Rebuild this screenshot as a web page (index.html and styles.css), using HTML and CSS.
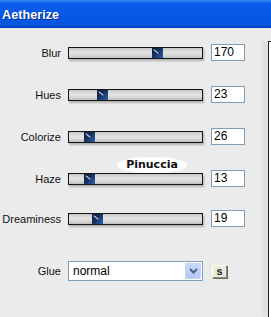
FILE: index.html
```html
<!DOCTYPE html>
<html>
<head>
<meta charset="utf-8">
<link rel="stylesheet" href="styles.css">
</head>
<body>
<div class="titlebar"><span class="title">Aetherize</span></div>
<div class="content">
  <div class="main">
    <div class="row">
      <span class="label">Blur</span>
      <div class="track"><div class="thumb" style="left:83px"></div></div>
      <div class="num">170</div>
    </div>
    <div class="row">
      <span class="label">Hues</span>
      <div class="track"><div class="thumb" style="left:28px"></div></div>
      <div class="num">23</div>
    </div>
    <div class="row">
      <span class="label">Colorize</span>
      <div class="track"><div class="thumb" style="left:15px"></div></div>
      <div class="num">26</div>
    </div>
    <div class="row">
      <span class="label">Haze</span>
      <div class="track"><div class="thumb" style="left:15px"></div></div>
      <div class="num">13</div>
    </div>
    <div class="row row-dream">
      <span class="label">Dreaminess</span>
      <div class="track"><div class="thumb" style="left:23px"></div></div>
      <div class="num">19</div>
    </div>
    <div class="row row-glue">
      <span class="label">Glue</span>
      <div class="select">
        <span class="select-text">normal</span>
        <span class="select-btn">
          <svg width="9" height="6" viewBox="0 0 9 6"><path d="M1 1 L4.5 4.5 L8 1" fill="none" stroke="#4d6185" stroke-width="2"/></svg>
        </span>
      </div>
      <div class="sbtn">s</div>
    </div>
    <div class="watermark">Pinuccia</div>
  </div>
  <div class="side"></div>
</div>
</body>
</html>
```
FILE: styles.css
```css
html, body {
  margin: 0;
  padding: 0;
}
body {
  width: 271px;
  height: 317px;
  background: #ebebeb;
  font-family: "Liberation Sans", Arial, sans-serif;
  overflow: hidden;
}
.titlebar {
  height: 28px;
  box-sizing: border-box;
  background: linear-gradient(#3b8cf5 0px, #1a6ef0 2px, #0a5ce8 4px, #0558e6 20px, #0a55dc 25px, #003cb8 28px);
  display: flex;
  align-items: center;
  padding-left: 2px;
  padding-top: 2px;
}
.title {
  color: #ffffff;
  font-weight: bold;
  font-size: 12.5px;
  text-shadow: 1px 1px 0 #0a2a80;
  letter-spacing: 0.1px;
}
.content {
  display: flex;
  height: 289px;
}
.main {
  position: relative;
  width: 268px;
  padding-top: 16px;
  display: flex;
  flex-direction: column;
  gap: 25px;
}
.row {
  display: flex;
  align-items: center;
  height: 17px;
}
.row-dream {
  margin-top: -2px;
}
.row-glue {
  margin-top: 9px;
  height: 20px;
}
.label {
  width: 61px;
  text-align: right;
  font-size: 11px;
  color: #111;
  flex: none;
}
.track {
  position: relative;
  margin-left: 7px;
  width: 135px;
  height: 12px;
  box-sizing: border-box;
  border: 1px solid #151515;
  background: linear-gradient(#c4c4c4 0px, #dedede 3px, #e4e4e4 5px, #d2d2d2 8px, #bdbdbd 10px);
  box-shadow: 1px 2px 2px rgba(0,0,0,0.25);
  flex: none;
}
.thumb {
  position: absolute;
  top: 0;
  width: 11px;
  height: 10px;
  background: linear-gradient(135deg, #0d1a33 0%, #15305c 45%, #2d63b0 100%);
}
.thumb::before {
  content: "";
  position: absolute;
  left: 1px;
  top: 3px;
  width: 6px;
  height: 1px;
  background: #dfe8f5;
  transform: rotate(40deg);
}
.num {
  margin-left: 8px;
  width: 34px;
  height: 17px;
  box-sizing: border-box;
  border: 1px solid #7f9db9;
  background: #fff;
  font-size: 12px;
  line-height: 15px;
  padding-left: 2px;
  color: #000;
  flex: none;
}
.select {
  margin-left: 7px;
  width: 135px;
  height: 20px;
  box-sizing: border-box;
  border: 1px solid #7f9db9;
  background: #fff;
  display: flex;
  align-items: center;
  justify-content: space-between;
  padding: 1px;
  flex: none;
}
.select-text {
  font-size: 12px;
  padding-left: 3px;
  color: #000;
}
.select-btn {
  width: 16px;
  height: 16px;
  box-sizing: border-box;
  border: 1px solid #c6d4f3;
  background: linear-gradient(#c8d8fb, #b4c8f4);
  display: flex;
  align-items: center;
  justify-content: center;
}
.sbtn {
  margin-left: 9px;
  width: 15px;
  height: 13px;
  box-sizing: border-box;
  border: 1px solid #8a8a80;
  border-top-color: #fff;
  border-left-color: #fff;
  background: #ecebd9;
  font-size: 11px;
  font-weight: bold;
  line-height: 10px;
  text-align: center;
  color: #222;
  box-shadow: 1px 1px 0 #6c6c66;
  flex: none;
}
.watermark {
  position: absolute;
  left: 117px;
  top: 129px;
  width: 70px;
  height: 16px;
  border-radius: 50%;
  background: #fff;
  font-family: "DejaVu Sans", sans-serif;
  font-weight: bold;
  font-size: 11px;
  line-height: 16px;
  text-align: center;
  color: #111;
}
.side {
  flex: 1;
  margin-top: 13px;
  border-left: 1px solid #222;
  border-top: 1px solid #222;
  background: #fff;
  box-shadow: -4px 0 5px rgba(0,0,0,0.12);
}
```
